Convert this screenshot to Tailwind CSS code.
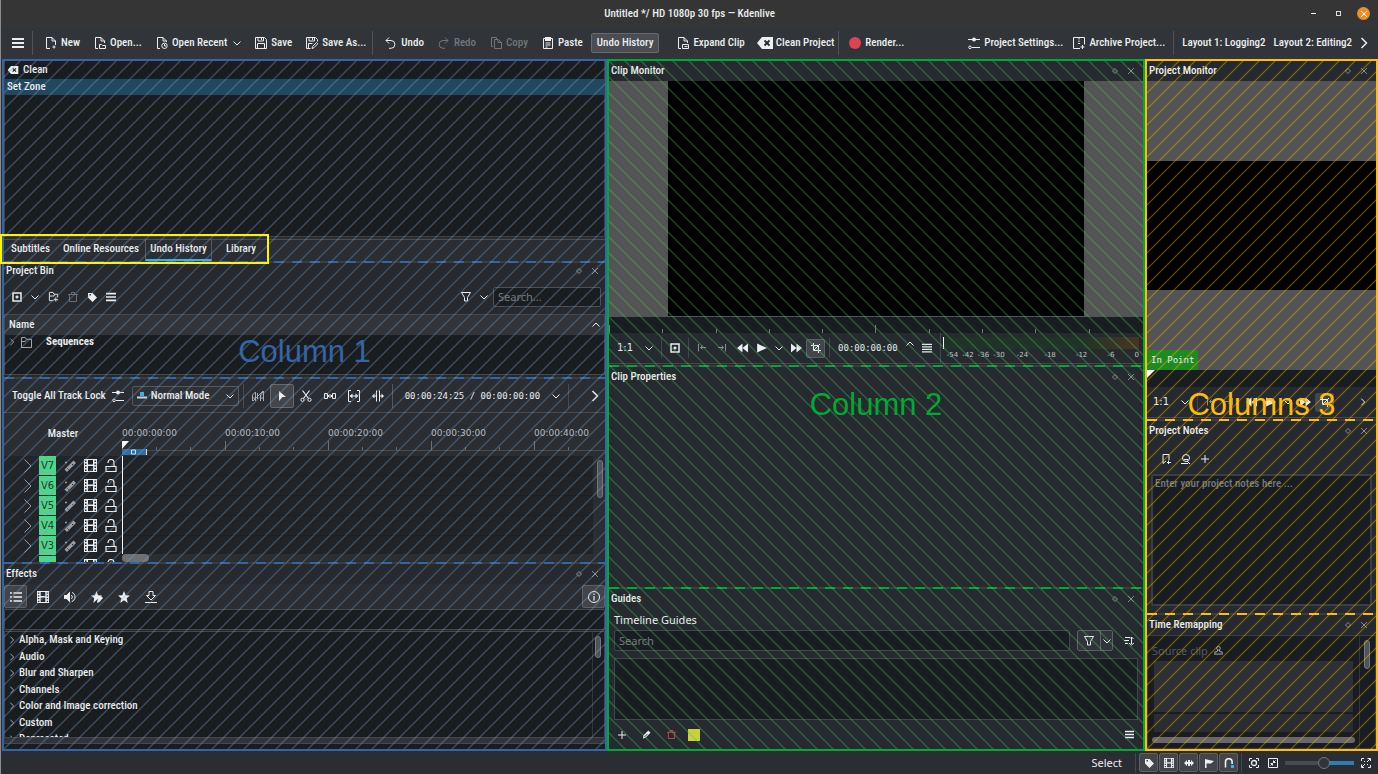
<!DOCTYPE html>
<html lang="en">
<head>
    <meta charset="UTF-8">
    <meta name="viewport" content="width=device-width, initial-scale=1.0">
    <title>Untitled */ HD 1080p 30 fps — Kdenlive</title>
    <script src="https://cdn.jsdelivr.net/npm/@tailwindcss/browser@4"></script>
</head>
<body class="bg-[#2a2d32] text-[#eceeef] text-[11px] leading-4 font-medium font-['Roboto_Condensed','Fira_Sans_Condensed',Roboto,sans-serif]">
    <!-- Icon sprite -->
    <svg class="hidden" fill="none">
        <symbol id="menu" viewBox="0 0 12 12"><path d="M0 2h12M0 6h12M0 10h12" stroke="currentColor" stroke-width="2"/></symbol>
        <symbol id="menu4" viewBox="0 0 12 12"><path d="M0 1.500h12M0 4.500h12M0 7.500h12M0 10.500h12" stroke="currentColor" stroke-width="1.500"/></symbol>
        <symbol id="new" viewBox="0 0 12 12"><path d="M5 11.500H1.500V.500h5.500l3.500 3.500v4M7 .500v3.500h3.500M9 8.500v3M7.500 10h3" stroke="currentColor" fill="none"/></symbol>
        <symbol id="open" viewBox="0 0 12 12"><path d="M4 11.500H1.500V.500h5.500l3.500 3.500v2M7 .500v3.500h3.500M5.500 11.500v-4h2l1 1h3v3z" stroke="currentColor" fill="none"/></symbol>
        <symbol id="recent" viewBox="0 0 12 12"><path d="M4 11.500H1.500V.500h5.500l3.500 3.500v1M7 .500v3.500h3.500M8.500 7v2h1.500" stroke="currentColor" fill="none"/><circle cx="8.500" cy="8.800" r="2.700" stroke="currentColor" fill="none"/></symbol>
        <symbol id="save" viewBox="0 0 12 12"><path d="M.500.500h9l2 2v9H.500zM3 .500v3.500h5.500V.500M6.500 1v2M2.500 11.500V6.500h7v5" stroke="currentColor" fill="none"/></symbol>
        <symbol id="saveas" viewBox="0 0 12 12"><path d="M4.500 11.500h-4V.500h9l2 2v2M3 .500v3.500h5.500V.500M6.500 1v2M2.500 11V6.500h4M6 11.500l.5-2 4-4 1.300 1.300-4 4z" stroke="currentColor" fill="none"/></symbol>
        <symbol id="undo" viewBox="0 0 12 12"><path d="M4 .500l-3 3 3 3M1 3.500h5a3.800 3.800 0 0 1 0 7.800H4" stroke="currentColor" fill="none"/></symbol>
        <symbol id="redo" viewBox="0 0 12 12"><path d="M7 .500l3 3-3 3M10 3.500H5a3.800 3.800 0 0 0 0 7.800h2" stroke="currentColor" fill="none"/></symbol>
        <symbol id="copy" viewBox="0 0 12 12"><path d="M3 9.500H1.500V.500h5v1.500M4.500 11.500v-9h4l3 3v6zM8 2.500v3h3.500" stroke="currentColor" fill="none"/></symbol>
        <symbol id="paste" viewBox="0 0 12 12"><path d="M1.500 1.500h9v10h-9zM3.500 6h5M3.500 8h5M3.500 10h2" stroke="currentColor" fill="none"/><path d="M3 0h6v4H3z" fill="currentColor"/></symbol>
        <symbol id="expand" viewBox="0 0 12 12"><path d="M4 11.500H1.500V.500h5.500l3.500 3.500v2M7 .500v3.500h3.500M5.500 11.500v-4h6v4zM7.500 9.500h3" stroke="currentColor" fill="none"/></symbol>
        <symbol id="clean" viewBox="0 0 16 12"><path d="M0 6l5-6h11v12H5z" fill="currentColor"/><path d="M7.500 3.500l5 5m0-5l-5 5" stroke="#26292d" stroke-width="1.800"/></symbol>
        <symbol id="sliders" viewBox="0 0 12 12"><path d="M0 2.500h12M4 10.500H12" stroke="currentColor"/><circle cx="6" cy="2.500" r="2" fill="currentColor"/><circle cx="2" cy="10.300" r="1.300" stroke="currentColor" fill="none"/></symbol>
        <symbol id="archive" viewBox="0 0 12 12"><path d="M7 11.500H.500V.500h11V7.500M6 1v1.500M6 3.500v1.500M5 6.500h2M9.500 8v4M7.500 10h4" stroke="currentColor" fill="none"/></symbol>
        <symbol id="down" viewBox="0 0 8 8"><path d="M.500 2.500L4 6l3.500-3.500" stroke="currentColor" fill="none"/></symbol>
        <symbol id="up" viewBox="0 0 8 8"><path d="M.500 5.500L4 2l3.500 3.500" stroke="currentColor" fill="none"/></symbol>
        <symbol id="right" viewBox="0 0 8 12"><path d="M1.500 1l5 5-5 5" stroke="currentColor" fill="none" stroke-width="1.500"/></symbol>
        <symbol id="rightthin" viewBox="0 0 8 14"><path d="M.500.500l6.500 6.500-6.500 6.500" stroke="currentColor" fill="none"/></symbol>
        <symbol id="diamond" viewBox="0 0 8 8"><path d="M4 1.500l2.500 2.500-2.500 2.500-2.500-2.500z" stroke="currentColor" fill="none"/></symbol>
        <symbol id="cross" viewBox="0 0 8 8"><path d="M1 1l6 6m0-6L1 7" stroke="currentColor" fill="none"/></symbol>
        <symbol id="clipadd" viewBox="0 0 10 10"><path d="M1 1h8v8H1z" stroke="currentColor" stroke-width="1.500" fill="none"/><path d="M3.500 5h3M5 3.500v3" stroke="currentColor" stroke-width="1.500"/></symbol>
        <symbol id="folderadd" viewBox="0 0 12 12"><path d="M6 10.500H1.500v-9h4l1 2h4V7M1.500 5.500h5l1-2M8.500 7v4.500M6.500 9.500h4.500" stroke="currentColor" fill="none"/></symbol>
        <symbol id="folder" viewBox="0 0 12 12"><path d="M.500 11.500V.500h4l1.500 2h5.500v9zM.500 5h4L6 3" stroke="currentColor" fill="none"/></symbol>
        <symbol id="trash" viewBox="0 0 10 10"><path d="M0 2.500h10M3.500 2V.500h3V2M1.500 2.500v7h7v-7" stroke="currentColor" fill="none"/></symbol>
        <symbol id="tag" viewBox="0 0 10 10"><path fill-rule="evenodd" d="M1 1h4.500L10 5.500 5.500 10 1 5.500zm1.500 1v1.500H4V2z" fill="currentColor"/></symbol>
        <symbol id="filter" viewBox="0 0 10 10"><path d="M.500.500h9L6.500 5.500V9h-3V5.500z" stroke="currentColor" fill="none"/></symbol>
        <symbol id="mode" viewBox="0 0 10 8"><path d="M3 0h4v4H3z" fill="#3daee9"/><path d="M0 4.500h10v2H0z" fill="#c8d4dc"/></symbol>
        <symbol id="mix" viewBox="0 0 12 12"><path d="M.500 11V5l3-3v9M.500 8h3M11.500 1v10M8.500 11V5L11 2M1 11L11 1M8.500 8h3M5.500 3v6" stroke="currentColor" fill="none"/></symbol>
        <symbol id="pointer" viewBox="0 0 12 12"><path d="M3 1l7 6H6.500L3 11z" fill="currentColor"/></symbol>
        <symbol id="cut" viewBox="0 0 12 12"><path d="M2.500.500l6 8M9.500.500l-6 8" stroke="currentColor" stroke-width="1.200"/><circle cx="2.500" cy="9.800" r="1.600" stroke="currentColor" fill="none"/><circle cx="9.500" cy="9.800" r="1.600" stroke="currentColor" fill="none"/></symbol>
        <symbol id="spacer" viewBox="0 0 12 12"><path d="M.500 3.500h3v5h-3zM8.500 3.500h3v5h-3zM4 6h4M5.500 4.500L4 6l1.500 1.500M6.500 4.500L8 6 6.500 7.500" stroke="currentColor" fill="none"/></symbol>
        <symbol id="slip" viewBox="0 0 12 12"><path d="M3 .500H.500v11H3M9 .500h2.500v11H9" stroke="currentColor" fill="none"/><path d="M1.500 6l3-2.500v2h3v-2l3 2.500-3 2.500v-2h-3v2z" fill="currentColor"/></symbol>
        <symbol id="ripple" viewBox="0 0 12 12"><path d="M4.500.500v11M7.500.500v11" stroke="currentColor"/><path d="M5 5.500H2.500v-2L0 6l2.500 2.500v-2H5zM7 5.500h2.500v-2L12 6 9.500 8.500v-2H7z" fill="currentColor"/></symbol>
        <symbol id="wand" viewBox="0 0 12 12"><path d="M.500 9.500L9.500.500 12 3 3 12z" fill="currentColor"/><path d="M3.500 8.500l1 1M8 4l1 1" stroke="#212428"/><path d="M1 2.500h2M2 1.500v2" stroke="currentColor"/></symbol>
        <symbol id="film" viewBox="0 0 13 13"><path fill-rule="evenodd" d="M0 0h13v13H0zM4 1v4.500h5V1zM4 7v5h5V7zM1 1.500v1.500h1.500V1.500zM1 4.500V6h1.500V4.500zM1 7.500V9h1.500V7.500zM1 10.500V12h1.500v-1.500zM10.500 1.500v1.500H12V1.500zM10.500 4.500V6H12V4.500zM10.500 7.500V9H12V7.500zM10.500 10.500V12H12v-1.500z" fill="currentColor"/></symbol>
        <symbol id="lock" viewBox="0 0 12 13"><path d="M1 7.500h10v5H1zM3 4V3.500a3 3 0 0 1 6 0v4" stroke="currentColor" stroke-width="1.200" fill="none"/></symbol>
        <symbol id="list" viewBox="0 0 12 12"><path d="M0 2h2M3.500 2H12M0 6h2M3.500 6H12M0 10h2M3.500 10H12" stroke="currentColor" stroke-width="1.500"/></symbol>
        <symbol id="sound" viewBox="0 0 12 12"><path d="M0 4h2.500L6 .500v11L2.500 8H0z" fill="currentColor"/><path d="M7.500 4a3 3 0 0 1 0 4M8 1.500c4 1 4 8 0 9" stroke="currentColor" fill="none"/></symbol>
        <symbol id="star" viewBox="0 0 12 12"><path d="M6 0l1.700 4.200 4.300.3-3.300 2.800L9.700 12 6 9.300 2.300 12l1-4.700L0 4.500l4.300-.3z" fill="currentColor"/></symbol>
        <symbol id="staredit" viewBox="0 0 12 12"><path d="M5.500 0L7 4.200l4 .3-3 3L5.500 9l-3.200 3 .9-4.700L0 4.500l4-.3zM6 12l.500-3 3.500-4 2 2-3.500 4z" fill="currentColor"/></symbol>
        <symbol id="download" viewBox="0 0 12 12"><path d="M4 .500h4v4h2.500L6 9 1.500 4.500H4zM0 11.500h12" stroke="currentColor" fill="none"/></symbol>
        <symbol id="info" viewBox="0 0 12 12"><circle cx="6" cy="6" r="5.500" stroke="currentColor" fill="none"/><path d="M6 2.500V4M6 5v4.500" stroke="currentColor" stroke-width="1.200"/></symbol>
        <symbol id="zonein" viewBox="0 0 10 10"><path d="M1.500 1v7.500M9 4.500H3.500M5.500 2.500l-2 2 2 2" stroke="currentColor" fill="none"/></symbol>
        <symbol id="zoneout" viewBox="0 0 10 10"><path d="M8.500 1v7.500M1 4.500h5.500M4.500 2.500l2 2-2 2" stroke="currentColor" fill="none"/></symbol>
        <symbol id="rewind" viewBox="0 0 10 10"><path d="M5 1v8L0 5zM10 1v8L5 5z" fill="currentColor"/></symbol>
        <symbol id="forward" viewBox="0 0 10 10"><path d="M0 1v8l5-4zM5 1v8l5-4z" fill="currentColor"/></symbol>
        <symbol id="play" viewBox="0 0 10 10"><path d="M1 1v8l9-4z" fill="currentColor"/></symbol>
        <symbol id="crop" viewBox="0 0 10 10"><path d="M2.500 0v7.500H10M0 2.500h7.500V10M9 1L3 7" stroke="currentColor" fill="none"/></symbol>
        <symbol id="bookmark" viewBox="0 0 10 10"><path d="M5 7L2 9.500V.500h6V6M7.500 6.500V10M6 8.500h4" stroke="currentColor" fill="none"/></symbol>
        <symbol id="author" viewBox="0 0 10 10"><circle cx="5" cy="4" r="3.500" stroke="currentColor" fill="none"/><path d="M0 9.500h7M6 7l3 3M3 5.500h4" stroke="currentColor"/></symbol>
        <symbol id="plus" viewBox="0 0 8 8"><path d="M4 0v8M0 4h8" stroke="currentColor"/></symbol>
        <symbol id="pencil" viewBox="0 0 10 10"><path d="M1 9.500l.500-3.500L7 .500 9.500 3 4 8.500z" fill="currentColor"/><path d="M2.500 8L6 4.500" stroke="#26292d"/></symbol>
        <symbol id="sort" viewBox="0 0 10 10"><path d="M1 1.500h5M0 4.500h5M1 7.500h3M7.500 1v7M6 2.500l1.500-1.500 2 2M5 7l2.500 2L10 7" stroke="currentColor" fill="none"/></symbol>
        <symbol id="stamp" viewBox="0 0 10 10"><circle cx="5" cy="2.500" r="2" stroke="currentColor" fill="none"/><path d="M1 8.500V6.500h2.500L4 4.500M9 8.500V6.500H6.500L6 4.500M0 9h10" stroke="currentColor" fill="none"/></symbol>
        <symbol id="markers" viewBox="0 0 10 10"><path d="M0 5l3-3v2h1V2h2v2h1V2l3 3-3 3V6H6v2H4V6H3v2z" fill="currentColor"/></symbol>
        <symbol id="flag" viewBox="0 0 10 10"><path d="M1 1l4 1 5 1-3 2.500H2.500V10H1z" fill="currentColor"/></symbol>
        <symbol id="magnet" viewBox="0 0 10 10"><path d="M1.500 9.500V4a3.300 3.300 0 0 1 6.600 0v2" stroke="currentColor" stroke-width="1.600" fill="none"/><path d="M7 7h3v3H7z" fill="#3daee9"/></symbol>
        <symbol id="zoomfit" viewBox="0 0 10 10"><path d="M.500 3V.500H3M7 .500h2.500V3M9.500 7v2.500H7M3 9.500H.500V7" stroke="currentColor" fill="none"/><circle cx="5" cy="5" r="2.500" stroke="currentColor" stroke-width="1.300" fill="none"/></symbol>
        <symbol id="zoomout" viewBox="0 0 10 10"><path d="M.500.500h9v9h-9zM7.500 2.500L5.500 4.500M5.500 2.500v2h2M2.500 5.500h2v2M4.500 5.500L2.500 7.500" stroke="currentColor" fill="none"/></symbol>
        <symbol id="zoomin" viewBox="0 0 10 10"><path d="M.500 3V.500H3M6.500 .500h3V3M9.500 7v2.500H7M3 9.500H.500V6.500M9 1L6 4M1 9l3-3M3 3l1 1M7 7L6 6" stroke="currentColor" fill="none"/></symbol>
    </svg>

    <div class="flex h-screen min-h-[700px] flex-col border-l border-[#8b8b8b]">
        <!-- Title bar -->
        <header class="relative flex h-[27px] shrink-0 items-center justify-center bg-[#353535] px-2">
            <h1>Untitled */ HD 1080p 30 fps — Kdenlive</h1>
            <div class="absolute right-2 flex items-center gap-4">
                <button aria-label="Minimize" class="mr-1 h-px w-[5px] bg-white"></button>
                <button aria-label="Restore" class="size-[5px] border border-[#ddd]"></button>
                <button aria-label="Close" class="grid size-[13px] place-items-center rounded-full bg-[#f28c28] text-white"><svg class="size-2"><use href="#cross"/></svg></button>
            </div>
        </header>

        <!-- Main toolbar -->
        <nav class="flex h-8 shrink-0 items-center whitespace-nowrap bg-[#31353a] pl-[11px] pr-2.5">
            <button aria-label="Menu"><svg class="size-3"><use href="#menu"/></svg></button>
            <i class="ml-2 h-6 w-px bg-[#505459]"></i>
            <div class="ml-3 flex gap-3.5">
                <button class="flex items-center gap-1"><svg class="size-3"><use href="#new"/></svg>New</button>
                <button class="flex items-center gap-1"><svg class="size-3"><use href="#open"/></svg>Open...</button>
                <button class="flex items-center gap-1"><svg class="size-3"><use href="#recent"/></svg>Open Recent <svg class="ml-0.5 size-2"><use href="#down"/></svg></button>
                <button class="flex items-center gap-1"><svg class="size-3"><use href="#save"/></svg>Save</button>
                <button class="flex items-center gap-1"><svg class="size-3"><use href="#saveas"/></svg>Save As...</button>
            </div>
            <i class="ml-1.5 h-6 w-px bg-[#505459]"></i>
            <div class="ml-3 flex gap-3.5">
                <button class="flex items-center gap-1"><svg class="size-3"><use href="#undo"/></svg>Undo</button>
                <button class="flex items-center gap-1 text-[#72767a]"><svg class="size-3"><use href="#redo"/></svg>Redo</button>
                <button class="flex items-center gap-1 text-[#72767a]"><svg class="size-3"><use href="#copy"/></svg>Copy</button>
                <button class="flex items-center gap-1"><svg class="size-3"><use href="#paste"/></svg>Paste</button>
            </div>
            <button class="ml-2 h-5 rounded-xs border border-[#666a6f] bg-[#4a4d52] px-[5px]">Undo History</button>
            <div class="ml-[18px] flex gap-3">
                <button class="flex items-center gap-1"><svg class="size-3"><use href="#expand"/></svg>Expand Clip</button>
                <button class="flex items-center gap-[3px]"><svg class="h-3 w-4"><use href="#clean"/></svg>Clean Project</button>
            </div>
            <i class="ml-1 mr-2.5 h-6 w-px bg-[#505459]"></i>
            <button class="flex items-center gap-1"><span class="size-3 rounded-full bg-[#da4453]"></span>Render...</button>
            <div class="ml-auto flex gap-2.5">
                <button class="flex items-center gap-1"><svg class="size-3"><use href="#sliders"/></svg>Project Settings...</button>
                <button class="flex items-center gap-1"><svg class="size-3"><use href="#archive"/></svg>Archive Project...</button>
            </div>
            <i class="mx-2 h-6 w-px bg-[#505459]"></i>
            <div class="flex items-center gap-2">
                <button>Layout 1: Logging2</button>
                <button>Layout 2: Editing2</button>
                <button aria-label="More"><svg class="h-3 w-2"><use href="#right"/></svg></button>
            </div>
        </nav>

        <main class="grid min-h-0 flex-1 grid-cols-[605fr_538fr_233fr] pl-px">
            <!-- Column 1 -->
            <div class="relative grid min-h-0 grid-rows-[200fr_116fr_185fr_187fr] border-2 border-[#3465a4]">
                <section class="flex min-h-0 flex-col">
                    <div class="flex min-h-0 flex-1 flex-col border border-t-0 border-[#3d4146] bg-[#1a1d20]">
                        <button class="flex h-[18px] items-center gap-1 px-0.5"><svg class="h-2 w-3"><use href="#clean"/></svg>Clean</button>
                        <div class="h-4 bg-[#21485f] px-0.5">Set Zone</div>
                    </div>
                    <div class="mt-0.5 flex h-[22px] items-stretch border-t border-[#4a4d52]">
                        <button class="w-[53px] pb-1">Subtitles</button>
                        <button class="w-[88px] pb-1">Online Resources</button>
                        <button class="w-[67px] border-x border-b-2 border-x-[#55585d] border-b-[#3daee9] pb-0.5">Undo History</button>
                        <button class="w-[58px] pb-1">Library</button>
                    </div>
                </section>

                <section class="flex min-h-0 flex-col bg-[#26292d]">
                    <div class="h-0.5 shrink-0 bg-[repeating-linear-gradient(90deg,#3465a4_0_10px,#3a3d41_10px_18px)]"></div>
                    <header class="flex h-4 shrink-0 items-center pl-0.5 pr-1.5"><h2 class="flex-1">Project Bin</h2><div class="flex gap-2 text-[#8a8d90]"><svg class="size-2"><use href="#diamond"/></svg><svg class="size-2"><use href="#cross"/></svg></div></header>
                    <div class="flex h-[35px] shrink-0 items-center gap-[9px] pl-2 pr-1">
                        <button aria-label="Add clip"><svg class="size-[10px]"><use href="#clipadd"/></svg></button>
                        <button aria-label="Add clip options"><svg class="size-2"><use href="#down"/></svg></button>
                        <button aria-label="Create folder"><svg class="size-[11px]"><use href="#folderadd"/></svg></button>
                        <button aria-label="Delete" class="text-[#6b6e72]"><svg class="size-[10px]"><use href="#trash"/></svg></button>
                        <button aria-label="Tags"><svg class="size-[10px]"><use href="#tag"/></svg></button>
                        <button aria-label="Options"><svg class="size-[10px]"><use href="#menu"/></svg></button>
                        <button aria-label="Filter" class="ml-auto"><svg class="size-[10px]"><use href="#filter"/></svg></button>
                        <button aria-label="Filter options"><svg class="size-2"><use href="#down"/></svg></button>
                        <input aria-label="Search clips" placeholder="Search..." class="-ml-1 h-5 w-[108px] rounded-xs border border-[#4c5055] bg-[#1a1d20] px-1 font-['Noto_Sans',sans-serif] text-[11px] font-normal placeholder:text-[#777a7e]">
                    </div>
                    <div class="mb-0.5 flex min-h-0 flex-1 flex-col border border-[#44474b] bg-[#1a1d20]">
                        <div class="flex h-5 shrink-0 items-center justify-between bg-[#31353a] px-1"><span>Name</span><svg class="size-2"><use href="#up"/></svg></div>
                        <div class="flex h-[14px] items-center pl-1"><svg class="h-2 w-[6px] text-[#9a9da0]"><use href="#right"/></svg><svg class="ml-1.5 size-[11px] text-[#b7babd]"><use href="#folder"/></svg><b class="ml-3.5">Sequences</b></div>
                    </div>
                </section>

                <section class="flex min-h-0 flex-col overflow-hidden">
                    <div class="h-0.5 shrink-0 bg-[repeating-linear-gradient(90deg,#3465a4_0_10px,#3a3d41_10px_18px)]"></div>
                    <div class="flex h-[34px] shrink-0 items-center border-b border-[#484b50] pl-2 pr-1">
                        <button>Toggle All Track Lock</button>
                        <button aria-label="Track settings" class="ml-1.5"><svg class="size-3"><use href="#sliders"/></svg></button>
                        <button class="ml-2 flex h-5 w-[107px] items-center gap-1 rounded-xs border border-[#55585d] bg-[#2e3136] px-1"><svg class="h-2 w-[10px]"><use href="#mode"/></svg>Normal Mode<svg class="ml-auto size-2"><use href="#down"/></svg></button>
                        <i class="ml-1 h-6 w-px bg-[#484b50]"></i>
                        <div class="ml-2 flex items-center gap-3">
                            <button aria-label="Mix" class="text-[#a9acaf]"><svg class="size-3"><use href="#mix"/></svg></button>
                            <button aria-label="Selection tool" class="-mx-1.5 grid h-6 w-6 place-items-center rounded-xs border border-[#666a6f] bg-[#42464a]"><svg class="size-3"><use href="#pointer"/></svg></button>
                            <button aria-label="Razor"><svg class="size-3"><use href="#cut"/></svg></button>
                            <button aria-label="Spacer"><svg class="size-3"><use href="#spacer"/></svg></button>
                            <button aria-label="Slip"><svg class="size-3"><use href="#slip"/></svg></button>
                            <button aria-label="Ripple"><svg class="size-3"><use href="#ripple"/></svg></button>
                        </div>
                        <i class="ml-2 h-6 w-px bg-[#55585d]"></i>
                        <button class="ml-3 flex items-center gap-3 whitespace-nowrap font-['DejaVu_Sans_Mono',monospace] text-[9px] font-normal">00:00:24:25 / 00:00:00:00 <svg class="size-2"><use href="#down"/></svg></button>
                        <i class="ml-2 h-6 w-px bg-[#484b50]"></i>
                        <button aria-label="More" class="ml-auto mr-0.5"><svg class="h-3 w-2"><use href="#right"/></svg></button>
                    </div>
                    <div class="flex h-[43px] shrink-0 items-end">
                        <div class="w-[118px] pb-3.5 text-center">Master</div>
                        <div class="flex h-full flex-1 flex-col overflow-hidden pt-3">
                            <div class="flex h-4 shrink-0 items-center font-['DejaVu_Sans',sans-serif] text-[9px] font-normal text-[#b7babd]">
                                <span class="w-[103px] shrink-0">00:00:00:00</span>
                                <span class="w-[103px] shrink-0">00:00:10:00</span>
                                <span class="w-[103px] shrink-0">00:00:20:00</span>
                                <span class="w-[103px] shrink-0">00:00:30:00</span>
                                <span class="shrink-0">00:00:40:00</span>
                            </div>
                            <svg class="h-[15px] w-full"><path d="M0 9.500h600" stroke="#484b50"/><path d="M103.500 0v9M206.500 0v9M309.500 0v9M412.500 0v9M34.500 6v3M68.500 6v3M137.500 6v3M171.500 6v3M240.500 6v3M274.500 6v3M343.500 6v3M377.500 6v3M446.500 6v3" stroke="#6b6e72"/><path d="M0 0h7l-7 8z" fill="#fff"/><path d="M0 8h25v6H0z" fill="#2f6da3"/><path d="M24.500 8v6" stroke="#cfe3f2"/><path d="M9.500 9h4v4h-4z" stroke="#cfe3f2" fill="none"/></svg>
                        </div>
                    </div>
                    <div class="flex min-h-0 flex-1">
                        <div class="w-[118px] overflow-hidden bg-[#212428]">
                            <div class="mb-px flex h-[19px] items-center pl-5"><svg class="h-[14px] w-2 text-[#9a9da0]"><use href="#rightthin"/></svg><span class="ml-[7px] grid h-[19px] w-[17px] place-items-center bg-[#4fd588] font-['DejaVu_Sans',sans-serif] text-[10px] font-normal text-[#1a3a28]">V7</span><svg class="ml-2 size-3 text-[#9a9da0]"><use href="#wand"/></svg><svg class="ml-2 size-[13px]"><use href="#film"/></svg><svg class="ml-2 h-[13px] w-3"><use href="#lock"/></svg></div>
                            <div class="mb-px flex h-[19px] items-center pl-5"><svg class="h-[14px] w-2 text-[#9a9da0]"><use href="#rightthin"/></svg><span class="ml-[7px] grid h-[19px] w-[17px] place-items-center bg-[#4fd588] font-['DejaVu_Sans',sans-serif] text-[10px] font-normal text-[#1a3a28]">V6</span><svg class="ml-2 size-3 text-[#9a9da0]"><use href="#wand"/></svg><svg class="ml-2 size-[13px]"><use href="#film"/></svg><svg class="ml-2 h-[13px] w-3"><use href="#lock"/></svg></div>
                            <div class="mb-px flex h-[19px] items-center pl-5"><svg class="h-[14px] w-2 text-[#9a9da0]"><use href="#rightthin"/></svg><span class="ml-[7px] grid h-[19px] w-[17px] place-items-center bg-[#4fd588] font-['DejaVu_Sans',sans-serif] text-[10px] font-normal text-[#1a3a28]">V5</span><svg class="ml-2 size-3 text-[#9a9da0]"><use href="#wand"/></svg><svg class="ml-2 size-[13px]"><use href="#film"/></svg><svg class="ml-2 h-[13px] w-3"><use href="#lock"/></svg></div>
                            <div class="mb-px flex h-[19px] items-center pl-5"><svg class="h-[14px] w-2 text-[#9a9da0]"><use href="#rightthin"/></svg><span class="ml-[7px] grid h-[19px] w-[17px] place-items-center bg-[#4fd588] font-['DejaVu_Sans',sans-serif] text-[10px] font-normal text-[#1a3a28]">V4</span><svg class="ml-2 size-3 text-[#9a9da0]"><use href="#wand"/></svg><svg class="ml-2 size-[13px]"><use href="#film"/></svg><svg class="ml-2 h-[13px] w-3"><use href="#lock"/></svg></div>
                            <div class="mb-px flex h-[19px] items-center pl-5"><svg class="h-[14px] w-2 text-[#9a9da0]"><use href="#rightthin"/></svg><span class="ml-[7px] grid h-[19px] w-[17px] place-items-center bg-[#4fd588] font-['DejaVu_Sans',sans-serif] text-[10px] font-normal text-[#1a3a28]">V3</span><svg class="ml-2 size-3 text-[#9a9da0]"><use href="#wand"/></svg><svg class="ml-2 size-[13px]"><use href="#film"/></svg><svg class="ml-2 h-[13px] w-3"><use href="#lock"/></svg></div>
                            <div class="flex h-[19px] items-center pl-5"><span class="ml-[15px] h-[19px] w-[17px] bg-[#4fd588]"></span><svg class="ml-7 size-[13px]"><use href="#film"/></svg><svg class="ml-2 h-[13px] w-3"><use href="#lock"/></svg></div>
                        </div>
                        <div class="flex flex-1 flex-col">
                            <div class="flex-1 border-l border-white bg-[#212427] bg-[repeating-linear-gradient(180deg,transparent_0_19px,#1b1e21_19px_20px)]"></div>
                            <div class="h-2"><div class="h-2 w-[27px] rounded-full bg-[#6d6f72]"></div></div>
                        </div>
                        <div class="w-3 pl-1 pt-1"><div class="h-[38px] w-[6px] rounded-full border border-[#74777b] bg-[#505459]"></div></div>
                    </div>
                </section>

                <section class="flex min-h-0 flex-col overflow-hidden bg-[#26292d]">
                    <div class="h-0.5 shrink-0 bg-[repeating-linear-gradient(90deg,#3465a4_0_10px,#3a3d41_10px_18px)]"></div>
                    <header class="flex h-5 shrink-0 items-center pl-0.5 pr-1.5"><h2 class="flex-1">Effects</h2><div class="flex gap-2 text-[#8a8d90]"><svg class="size-2"><use href="#diamond"/></svg><svg class="size-2"><use href="#cross"/></svg></div></header>
                    <div class="flex h-[25px] shrink-0 items-center gap-[15px] bg-[#2a2d32]">
                        <button aria-label="Main effects" class="-mr-[5px] grid h-[23px] w-[23px] place-items-center rounded-xs border border-[#5c6064] bg-[#42464a]"><svg class="size-3"><use href="#list"/></svg></button>
                        <button aria-label="Video effects"><svg class="size-3"><use href="#film"/></svg></button>
                        <button aria-label="Audio effects"><svg class="size-3"><use href="#sound"/></svg></button>
                        <button aria-label="Custom effects"><svg class="size-3"><use href="#staredit"/></svg></button>
                        <button aria-label="Favorites"><svg class="size-3"><use href="#star"/></svg></button>
                        <button aria-label="Download"><svg class="size-3"><use href="#download"/></svg></button>
                        <button aria-label="Info" class="ml-auto grid h-[23px] w-[23px] place-items-center rounded-xs border border-[#5c6064] bg-[#42464a]"><svg class="size-3"><use href="#info"/></svg></button>
                    </div>
                    <input aria-label="Search effects" class="h-[21px] shrink-0 rounded-xs border border-[#44474b] bg-[#1a1d20]">
                    <div class="mt-px flex min-h-0 flex-1 border border-b-0 border-[#44474b] bg-[#1a1d20]">
                        <ul class="flex h-[115px] flex-1 flex-col justify-between">
                            <li class="flex items-center"><svg class="mx-1 h-2 w-[6px] text-[#a9acaf]"><use href="#right"/></svg>Alpha, Mask and Keying</li>
                            <li class="flex items-center"><svg class="mx-1 h-2 w-[6px] text-[#a9acaf]"><use href="#right"/></svg>Audio</li>
                            <li class="flex items-center"><svg class="mx-1 h-2 w-[6px] text-[#a9acaf]"><use href="#right"/></svg>Blur and Sharpen</li>
                            <li class="flex items-center"><svg class="mx-1 h-2 w-[6px] text-[#a9acaf]"><use href="#right"/></svg>Channels</li>
                            <li class="flex items-center"><svg class="mx-1 h-2 w-[6px] text-[#a9acaf]"><use href="#right"/></svg>Color and Image correction</li>
                            <li class="flex items-center"><svg class="mx-1 h-2 w-[6px] text-[#a9acaf]"><use href="#right"/></svg>Custom</li>
                            <li class="flex items-center"><svg class="mx-1 h-2 w-[6px] text-[#a9acaf]"><use href="#right"/></svg>Deprecated</li>
                        </ul>
                        <div class="w-3 border-l border-[#33363a] pl-0.5 pt-1"><div class="h-[22px] w-[6px] rounded-full border border-[#74777b] bg-[#505459]"></div></div>
                    </div>
                    <div class="relative h-[7px] shrink-0 border-y border-[#44474b] bg-[#31353a]"></div>
                    <div class="h-[5px] shrink-0 bg-[#1a1d20]"></div>
                </section>

                <svg class="pointer-events-none absolute inset-0 size-full"><defs><pattern id="hatch1" width="16" height="16" patternUnits="userSpaceOnUse"><path d="M-2 18L18-2M-2 2L2-2M14 18l4-4" stroke="#7ba0d0" stroke-opacity=".36" stroke-width="1.300"/></pattern></defs><rect width="100%" height="100%" fill="url(#hatch1)"/></svg>
                <div class="pointer-events-none absolute -left-1 top-[173px] h-[30px] w-[269px] border-2 border-[#fdf500]"></div>
                <div class="pointer-events-none absolute inset-x-0 top-[40%] text-center font-['Liberation_Sans',Arial,sans-serif] text-[31px] leading-none font-normal text-[#3465a4]">Column 1</div>
            </div>

            <!-- Column 2 -->
            <div class="relative grid min-h-0 grid-rows-[304fr_222fr_162fr] border-2 border-[#00a933] bg-[#26292d]">
                <section class="flex min-h-0 flex-col">
                    <header class="flex h-5 shrink-0 items-center pl-0.5 pr-2"><h2 class="flex-1">Clip Monitor</h2><div class="flex gap-2 text-[#8a8d90]"><svg class="size-2"><use href="#diamond"/></svg><svg class="size-2"><use href="#cross"/></svg></div></header>
                    <div class="flex min-h-0 flex-1 justify-center border-b border-[#505459] bg-[#545454]"><div class="w-[78%] bg-black"></div></div>
                    <div class="flex h-4 shrink-0 items-end justify-between bg-[#1a1d20]">
                        <i class="h-2 w-px bg-[#777]"></i><i class="h-1 w-px bg-[#777]"></i><i class="h-1 w-px bg-[#777]"></i><i class="h-1 w-px bg-[#777]"></i><i class="h-1 w-px bg-[#777]"></i><i class="h-2 w-px bg-[#777]"></i><i class="h-1 w-px bg-[#777]"></i><i class="h-1 w-px bg-[#777]"></i><i class="h-1 w-px bg-[#777]"></i><i class="h-1 w-px bg-[#777]"></i><i class="h-2 w-px"></i>
                    </div>
                    <div class="mb-px flex h-[31px] shrink-0 items-center border-b border-[#44474b] pl-2">
                        <button class="flex items-center gap-3 font-['DejaVu_Sans',sans-serif] text-[10px] font-normal">1:1 <svg class="size-2"><use href="#down"/></svg></button>
                        <i class="mx-2 h-5 w-px bg-[#44474b]"></i>
                        <button aria-label="Insert zone"><svg class="size-[10px]"><use href="#clipadd"/></svg></button>
                        <i class="mx-2 h-5 w-px bg-[#44474b]"></i>
                        <div class="flex items-center gap-2">
                            <button aria-label="Zone in" class="mr-0.5 text-[#8a8d90]"><svg class="size-[10px]"><use href="#zonein"/></svg></button>
                            <button aria-label="Zone out" class="mr-0.5 text-[#8a8d90]"><svg class="size-[10px]"><use href="#zoneout"/></svg></button>
                            <button aria-label="Rewind"><svg class="h-3 w-[11px]"><use href="#rewind"/></svg></button>
                            <button aria-label="Play"><svg class="h-3 w-[11px]"><use href="#play"/></svg></button>
                            <button aria-label="Play options"><svg class="size-2"><use href="#down"/></svg></button>
                            <button aria-label="Forward"><svg class="h-3 w-[11px]"><use href="#forward"/></svg></button>
                            <button aria-label="Edit mode" class="-ml-1 grid h-[19px] w-[19px] place-items-center rounded-xs border border-[#5c6064] bg-[#42464a]"><svg class="size-[10px]"><use href="#crop"/></svg></button>
                        </div>
                        <i class="mx-1 h-5 w-px bg-[#44474b]"></i>
                        <span class="ml-1 font-['DejaVu_Sans_Mono',monospace] text-[9px] font-normal">00:00:00:00</span>
                        <svg class="mb-2 ml-2 size-2"><use href="#up"/></svg>
                        <button aria-label="Options" class="ml-2"><svg class="size-[10px]"><use href="#menu4"/></svg></button>
                        <div class="ml-2 flex-1 self-stretch border-l border-[#44474b] pl-0.5 pr-1 pt-1">
                            <div class="h-3 border-l border-white bg-linear-to-r from-[#1f3326] from-70% to-[#4a3322]"></div>
                            <div class="flex justify-between pl-1 font-['DejaVu_Sans',sans-serif] text-[7px] leading-3 font-normal text-[#c0c3c5]"><span>-54</span><span>-42</span><span>-36</span><span>-30</span><span class="pl-2">-24</span><span class="pl-3">-18</span><span class="pl-4">-12</span><span class="pl-4">-6</span><span class="pl-4">0</span></div>
                        </div>
                    </div>
                </section>

                <section class="flex min-h-0 flex-col">
                    <div class="h-0.5 shrink-0 bg-[repeating-linear-gradient(90deg,#00a933_0_10px,#3a3d41_10px_18px)]"></div>
                    <header class="flex h-5 shrink-0 items-center pl-0.5 pr-2"><h2 class="flex-1">Clip Properties</h2><div class="flex gap-2 text-[#8a8d90]"><svg class="size-2"><use href="#diamond"/></svg><svg class="size-2"><use href="#cross"/></svg></div></header>
                </section>

                <section class="flex min-h-0 flex-col">
                    <div class="h-0.5 shrink-0 bg-[repeating-linear-gradient(90deg,#00a933_0_10px,#3a3d41_10px_18px)]"></div>
                    <header class="flex h-5 shrink-0 items-center pl-0.5 pr-2"><h2 class="flex-1">Guides</h2><div class="flex gap-2 text-[#8a8d90]"><svg class="size-2"><use href="#diamond"/></svg><svg class="size-2"><use href="#cross"/></svg></div></header>
                    <div class="flex min-h-0 flex-1 flex-col px-[5px] font-['Noto_Sans',sans-serif] font-normal">
                        <h3 class="pt-[3px] pb-0.5 leading-4">Timeline Guides</h3>
                        <div class="flex h-[21px] shrink-0 items-center gap-[7px]">
                            <input aria-label="Search guides" placeholder="Search" class="h-[21px] min-w-0 flex-1 rounded-xs border border-[#44474b] bg-[#1a1d20] px-1 placeholder:text-[#777a7e]">
                            <div class="flex h-[21px] rounded-xs border border-[#5c6064] bg-[#31353a]">
                                <button aria-label="Filter" class="grid w-[22px] place-items-center"><svg class="size-[10px]"><use href="#filter"/></svg></button>
                                <button aria-label="Filter options" class="grid w-3 place-items-center border-l border-[#5c6064]"><svg class="size-2"><use href="#down"/></svg></button>
                            </div>
                            <button aria-label="Sort" class="mx-1"><svg class="size-[10px]"><use href="#sort"/></svg></button>
                        </div>
                        <div class="mt-[7px] min-h-0 flex-1 border border-[#44474b] bg-[#1a1d20]"></div>
                        <div class="flex h-[29px] shrink-0 items-center gap-4 px-1">
                            <button aria-label="Add guide"><svg class="size-2"><use href="#plus"/></svg></button>
                            <button aria-label="Edit guide"><svg class="size-[9px]"><use href="#pencil"/></svg></button>
                            <button aria-label="Delete guide" class="text-[#da4453]"><svg class="size-[9px]"><use href="#trash"/></svg></button>
                            <button aria-label="Category color" class="-ml-1 size-3 bg-[#cbd038]"></button>
                            <button aria-label="Options" class="ml-auto"><svg class="size-[9px]"><use href="#menu"/></svg></button>
                        </div>
                    </div>
                </section>

                <svg class="pointer-events-none absolute inset-0 size-full"><defs><pattern id="hatch2" width="16" height="16" patternUnits="userSpaceOnUse"><path d="M-2-2l20 20M-2 14l4 4M14-2l4 4" stroke="#3fc46c" stroke-opacity=".38" stroke-width="1.300"/></pattern></defs><rect width="100%" height="100%" fill="url(#hatch2)"/></svg>
                <div class="pointer-events-none absolute inset-x-0 top-[328px] text-center font-['Liberation_Sans',Arial,sans-serif] text-[31px] leading-none font-normal text-[#00a933]">Column 2</div>
            </div>

            <!-- Column 3 -->
            <div class="relative grid min-h-0 grid-rows-[358fr_194fr_136fr] border-2 border-[#ffbc0a] bg-[#26292d]">
                <section class="flex min-h-0 flex-col">
                    <header class="flex h-5 shrink-0 items-center pl-0.5 pr-2"><h2 class="flex-1">Project Monitor</h2><div class="flex gap-2 text-[#8a8d90]"><svg class="size-2"><use href="#diamond"/></svg><svg class="size-2"><use href="#cross"/></svg></div></header>
                    <div class="relative flex min-h-0 flex-1 flex-col justify-center bg-[#545454]">
                        <div class="h-[129px] bg-black"></div>
                        <span class="absolute bottom-0 left-0 h-5 bg-[#1f8a22] px-1 font-['DejaVu_Sans_Mono',monospace] text-[9px] leading-5 font-normal">In Point</span>
                    </div>
                    <div class="h-[17px] shrink-0 bg-[#1a1d20]"><svg class="size-2"><path d="M0 0h8l-8 8z" fill="#fff"/></svg></div>
                    <div class="mb-px flex h-[31px] shrink-0 items-center gap-2 border-b border-[#44474b] px-1.5">
                        <button class="flex items-center gap-3 font-['DejaVu_Sans',sans-serif] text-[10px] font-normal">1:1 <svg class="size-2"><use href="#down"/></svg></button>
                        <i class="h-5 w-px bg-[#44474b]"></i>
                        <button aria-label="Zone in" class="text-[#8a8d90]"><svg class="size-[10px]"><use href="#zonein"/></svg></button>
                        <button aria-label="Zone out" class="mr-1 text-[#8a8d90]"><svg class="size-[10px]"><use href="#zoneout"/></svg></button>
                        <button aria-label="Rewind"><svg class="h-3 w-[11px]"><use href="#rewind"/></svg></button>
                        <button aria-label="Play"><svg class="h-3 w-[11px]"><use href="#play"/></svg></button>
                        <button aria-label="Play options"><svg class="size-2"><use href="#down"/></svg></button>
                        <button aria-label="Forward"><svg class="h-3 w-[11px]"><use href="#forward"/></svg></button>
                        <button aria-label="Edit mode" class="-ml-1 grid h-[19px] w-[19px] place-items-center rounded-xs bg-[#42464a]"><svg class="size-[10px]"><use href="#crop"/></svg></button>
                        <button aria-label="More" class="ml-auto mr-1"><svg class="h-2 w-[6px]"><use href="#right"/></svg></button>
                    </div>
                </section>

                <section class="flex min-h-0 flex-col">
                    <div class="h-0.5 shrink-0 bg-[repeating-linear-gradient(90deg,#ffbc0a_0_10px,#3a3d41_10px_18px)]"></div>
                    <header class="flex h-[19px] shrink-0 items-center pl-0.5 pr-2"><h2 class="flex-1">Project Notes</h2><div class="flex gap-2 text-[#8a8d90]"><svg class="size-2"><use href="#diamond"/></svg><svg class="size-2"><use href="#cross"/></svg></div></header>
                    <div class="flex h-[34px] shrink-0 items-center gap-[10px] pl-3.5 pt-1">
                        <button aria-label="Insert timecode"><svg class="size-[10px]"><use href="#bookmark"/></svg></button>
                        <button aria-label="Assign clip"><svg class="size-[10px]"><use href="#author"/></svg></button>
                        <button aria-label="Create marker"><svg class="size-2"><use href="#plus"/></svg></button>
                    </div>
                    <textarea aria-label="Project notes" placeholder="Enter your project notes here ..." class="mx-1 mb-[7px] min-h-0 flex-1 resize-none rounded-xs border-2 border-[#3a3e42] bg-[#1a1d20] px-0.5 placeholder:text-[#777a7e]"></textarea>
                </section>

                <section class="flex min-h-0 flex-col">
                    <div class="h-0.5 shrink-0 bg-[repeating-linear-gradient(90deg,#ffbc0a_0_10px,#3a3d41_10px_18px)]"></div>
                    <header class="flex h-5 shrink-0 items-center pl-0.5 pr-2"><h2 class="flex-1">Time Remapping</h2><div class="flex gap-2 text-[#8a8d90]"><svg class="size-2"><use href="#diamond"/></svg><svg class="size-2"><use href="#cross"/></svg></div></header>
                    <div class="flex min-h-0 flex-1 border border-[#3a3e42] bg-[#1a1d20]">
                        <div class="flex min-w-0 flex-1 flex-col px-1">
                            <div class="flex h-[25px] shrink-0 items-center gap-1.5 pt-1 font-['Noto_Sans',sans-serif] font-normal text-[#55585d]">Source clip <svg class="size-[9px] text-[#b0b3b5]"><use href="#stamp"/></svg></div>
                            <div class="mx-0.5 flex-[50] bg-[#2e3034]"></div>
                            <div class="mx-0.5 mt-0.5 flex-[18] bg-[#2a2c30]"></div>
                            <div class="my-[5px] h-[6px] shrink-0 rounded-full bg-[#66686c]"></div>
                        </div>
                        <div class="w-4 border-l border-[#33363a] pl-1 pt-1"><div class="h-[29px] w-[6px] rounded-full border border-[#74777b] bg-[#505459]"></div></div>
                    </div>
                </section>

                <svg class="pointer-events-none absolute inset-0 size-full"><defs><pattern id="hatch3" width="16" height="16" patternUnits="userSpaceOnUse"><path d="M-2 18L18-2M-2 2L2-2M14 18l4-4" stroke="#ffbc0a" stroke-opacity=".42" stroke-width="1.200"/></pattern></defs><rect width="100%" height="100%" fill="url(#hatch3)"/></svg>
                <div class="pointer-events-none absolute inset-x-0 top-[328px] text-center font-['Liberation_Sans',Arial,sans-serif] text-[31px] leading-none font-normal text-[#ffbc0a]">Columns 3</div>
            </div>
        </main>

        <!-- Status bar -->
        <footer class="flex h-[23px] shrink-0 items-center justify-end gap-px pr-[7px]">
            <span class="mr-3 font-['Noto_Sans',sans-serif] font-normal">Select</span>
            <i class="mr-0.5 h-5 w-px bg-[#44474b]"></i>
            <button aria-label="Tags" class="grid size-[19px] place-items-center rounded-xs border border-[#5c6064] bg-[#42464a]"><svg class="size-[10px]"><use href="#tag"/></svg></button>
            <button aria-label="Video thumbnails" class="grid size-[19px] place-items-center rounded-xs border border-[#5c6064] bg-[#42464a]"><svg class="size-[10px]"><use href="#film"/></svg></button>
            <button aria-label="Audio thumbnails" class="grid size-[19px] place-items-center rounded-xs border border-[#5c6064] bg-[#42464a]"><svg class="size-[10px]"><use href="#markers"/></svg></button>
            <button aria-label="Markers" class="grid size-[19px] place-items-center rounded-xs border border-[#5c6064] bg-[#42464a]"><svg class="size-[10px]"><use href="#flag"/></svg></button>
            <button aria-label="Snap" class="grid size-[19px] place-items-center rounded-xs border border-[#5c6064] bg-[#42464a]"><svg class="size-[10px]"><use href="#magnet"/></svg></button>
            <i class="ml-0.5 mr-1.5 h-5 w-px bg-[#44474b]"></i>
            <button aria-label="Fit zoom" class="mr-2"><svg class="size-[10px]"><use href="#zoomfit"/></svg></button>
            <button aria-label="Zoom out" class="mr-1.5"><svg class="size-[10px]"><use href="#zoomout"/></svg></button>
            <input type="range" aria-label="Zoom" min="0" max="100" value="58" class="mr-1.5 h-3 w-[69px] appearance-none bg-[linear-gradient(90deg,#484b50_0_58%,#2f7db5_58%)] bg-[length:100%_4px] bg-center bg-no-repeat [&::-webkit-slider-thumb]:size-3 [&::-webkit-slider-thumb]:appearance-none [&::-webkit-slider-thumb]:rounded-full [&::-webkit-slider-thumb]:border [&::-webkit-slider-thumb]:border-[#74777b] [&::-webkit-slider-thumb]:bg-[#31353a]">
            <button aria-label="Zoom in"><svg class="size-[10px]"><use href="#zoomin"/></svg></button>
        </footer>
    </div>
</body>
</html>
